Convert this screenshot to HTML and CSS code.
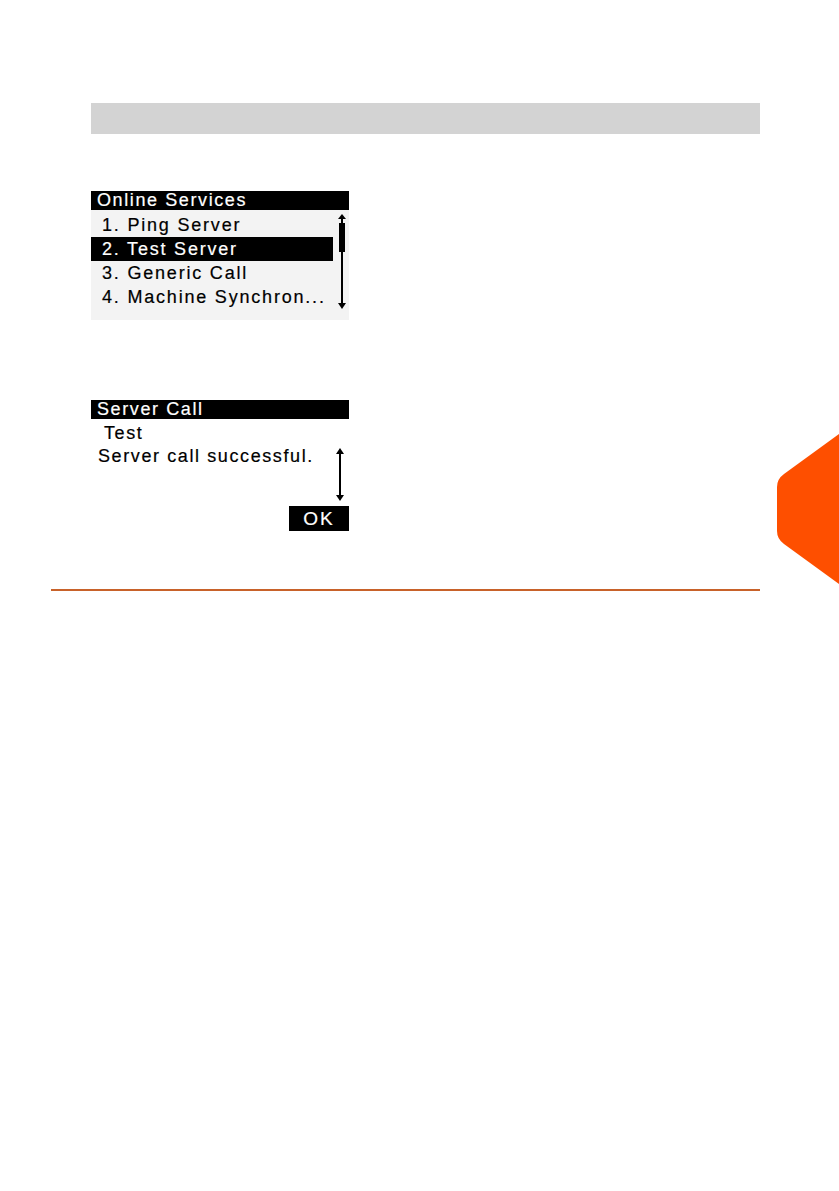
FILE: index.html
```html
<!DOCTYPE html>
<html>
<head>
<meta charset="utf-8">
<link rel="stylesheet" href="styles.css">
</head>
<body>
<div class="page">
  <div class="graybar"></div>

  <div class="lcd lcd-menu">
    <div class="lcd-title">Online Services</div>
    <div class="lcd-body">
      <ul class="menu">
        <li class="item">1. Ping Server</li>
        <li class="item selected">2. Test Server</li>
        <li class="item">3. Generic Call</li>
        <li class="item">4. Machine Synchron...</li>
      </ul>
      <svg class="scroll scroll-menu" width="12" height="96" viewBox="0 0 12 96">
        <polygon points="6,0 2,5 10,5" fill="#000"/>
        <rect x="5" y="4" width="2" height="86" fill="#000"/>
        <rect x="3" y="9" width="6" height="29" fill="#000"/>
        <polygon points="6,95 2,89 10,89" fill="#000"/>
      </svg>
    </div>
  </div>

  <div class="lcd lcd-msg">
    <div class="lcd-title">Server Call</div>
    <div class="lcd-body msg-body">
      <div class="msg-text">
        <div class="msg-line msg-sub">Test</div>
        <div class="msg-line">Server call successful.</div>
      </div>
      <svg class="scroll scroll-msg" width="12" height="54" viewBox="0 0 12 54">
        <polygon points="6,0 2,6 10,6" fill="#000"/>
        <rect x="5" y="4" width="2" height="46" fill="#000"/>
        <polygon points="6,53 2,47 10,47" fill="#000"/>
      </svg>
    </div>
    <div class="ok-row"><span class="ok">OK</span></div>
  </div>

  <div class="rule"></div>
</div>
<svg class="tab" width="62" height="150" viewBox="0 0 62 150">
  <path d="M62,0 L7,40 Q0,45 0,53 L0,97 Q0,105 7,110 L62,150 Z" fill="#fe4f00"/>
</svg>
</body>
</html>
```

FILE: styles.css
```css
html, body {
  margin: 0;
  padding: 0;
  background: #ffffff;
}
body {
  width: 839px;
  height: 1191px;
  position: relative;
  overflow: hidden;
  font-family: "Liberation Sans", Arial, sans-serif;
}
.page {
  padding-top: 103px;
}
.graybar {
  margin-left: 91px;
  width: 669px;
  height: 31px;
  background: #d3d3d3;
}
.lcd {
  margin-left: 91px;
  width: 258px;
  font-family: "Liberation Sans", Arial, sans-serif;
  font-size: 18px;
  letter-spacing: 1.8px;
  color: #000;
  -webkit-text-stroke: 0.2px currentColor;
}
.lcd-menu {
  margin-top: 57px;
}
.lcd-title {
  background: #000;
  color: #fff;
  height: 19px;
  line-height: 19px;
  padding-left: 6px;
  letter-spacing: 1.6px;
}
.lcd-body {
  display: flex;
}
.lcd-menu .lcd-body {
  background: #f3f3f3;
  height: 110px;
  padding-top: 3px;
  box-sizing: border-box;
}
.menu {
  list-style: none;
  margin: 0;
  padding: 0;
  width: 242px;
}
.item {
  height: 24px;
  line-height: 24px;
  padding-left: 11px;
  white-space: nowrap;
}
.item.selected {
  background: #000;
  color: #fff;
}
.scroll {
  display: block;
}
.scroll-menu {
  margin-left: 3px;
  margin-top: 1px;
}
.lcd-msg {
  margin-top: 80px;
}
.msg-body {
  justify-content: space-between;
}
.msg-text {
  padding-top: 3px;
}
.msg-line {
  height: 23px;
  line-height: 23px;
  padding-left: 7px;
  white-space: nowrap;
  letter-spacing: 1.6px;
}
.msg-sub {
  padding-left: 13px;
}
.scroll-msg {
  margin-top: 29px;
  margin-right: 3px;
}
.ok-row {
  display: flex;
  justify-content: flex-end;
  margin-top: 4px;
}
.ok {
  display: block;
  width: 60px;
  height: 25px;
  line-height: 25px;
  background: #000;
  color: #fff;
  text-align: center;
  letter-spacing: 2px;
  font-size: 19px;
}
.rule {
  margin-top: 58px;
  margin-left: 51px;
  width: 709px;
  height: 2px;
  background: #c8622a;
}
.tab {
  position: absolute;
  left: 777px;
  top: 434px;
  display: block;
}
```
